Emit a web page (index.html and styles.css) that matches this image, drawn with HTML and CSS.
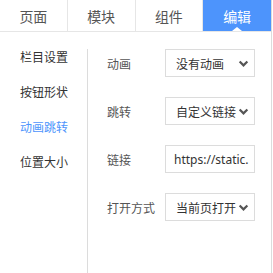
FILE: index.html
```html
<!DOCTYPE html>
<html>
<head>
<meta charset="utf-8">
<link rel="stylesheet" href="styles.css">
</head>
<body>
<div class="editor">
  <div class="tabs">
    <div class="tab">页面</div>
    <div class="tab">模块</div>
    <div class="tab">组件</div>
    <div class="tab active">编辑</div>
  </div>
  <div class="body">
    <ul class="side">
      <li>栏目设置</li>
      <li>按钮形状</li>
      <li class="on">动画跳转</li>
      <li>位置大小</li>
    </ul>
    <div class="panel">
      <div class="row"><span class="label">动画</span><div class="field select">没有动画<svg class="chev" viewBox="0 0 10 10"><path d="M1.5 3.2 L5 6.7 L8.5 3.2" fill="none" stroke="#555" stroke-width="2"/></svg></div></div>
      <div class="row"><span class="label">跳转</span><div class="field select">自定义链接<svg class="chev" viewBox="0 0 10 10"><path d="M1.5 3.2 L5 6.7 L8.5 3.2" fill="none" stroke="#555" stroke-width="2"/></svg></div></div>
      <div class="row"><span class="label">链接</span><div class="field input">https://static.</div></div>
      <div class="row"><span class="label">打开方式</span><div class="field select">当前页打开<svg class="chev" viewBox="0 0 10 10"><path d="M1.5 3.2 L5 6.7 L8.5 3.2" fill="none" stroke="#555" stroke-width="2"/></svg></div></div>
    </div>
  </div>
</div>
</body>
</html>
```
FILE: styles.css
```css
html, body { margin: 0; padding: 0; background: #fff; }
body { font-family: "Noto Sans CJK SC", "Noto Sans", sans-serif; }
.editor {
  width: 271px;
  height: 273px;
  border-right: 1px solid #dcdcdc;
  display: flex;
  flex-direction: column;
}
.tabs {
  display: grid;
  grid-template-columns: repeat(4, 1fr);
  height: 31px;
  border-bottom: 1px solid #e6e6e6;
}
.tab {
  font-size: 14px;
  color: #555;
  display: flex;
  align-items: center;
  justify-content: center;
  border-right: 1px solid #e6e6e6;
  position: relative;
}
.tab.active {
  background: #4d94fc;
  color: #fff;
  border-right: none;
}
.tab.active::after {
  content: "";
  position: absolute;
  left: 50%;
  bottom: 0;
  margin-left: -5px;
  border-left: 5px solid transparent;
  border-right: 5px solid transparent;
  border-bottom: 4px solid #fff;
}
.body { display: flex; flex: 1; }
.side {
  list-style: none;
  margin: 0;
  padding: 7px 0 0 20px;
  width: 67px;
  font-size: 12px;
  color: #333;
}
.side li { height: 35px; line-height: 35px; }
.side li.on { color: #4d94fc; }
.panel {
  margin-top: 17px;
  border-left: 1px solid #dcdcdc;
  padding-left: 19px;
  flex: 1;
}
.row {
  display: flex;
  align-items: center;
  height: 28px;
  margin-bottom: 20px;
}
.label { width: 58px; font-size: 12px; color: #555; }
.field {
  width: 90px;
  height: 28px;
  box-sizing: border-box;
  border: 1px solid #dcdcdc;
  display: flex;
  align-items: center;
  padding-left: 10px;
  font-size: 12px;
  color: #333;
  position: relative;
  white-space: nowrap;
  overflow: hidden;
}
.field.input { font-size: 12px; padding-left: 8px; font-family: "Noto Sans", "Open Sans", sans-serif; }
.chev { position: absolute; right: 5px; top: 8px; width: 11px; height: 11px; background: #fff; }
```
